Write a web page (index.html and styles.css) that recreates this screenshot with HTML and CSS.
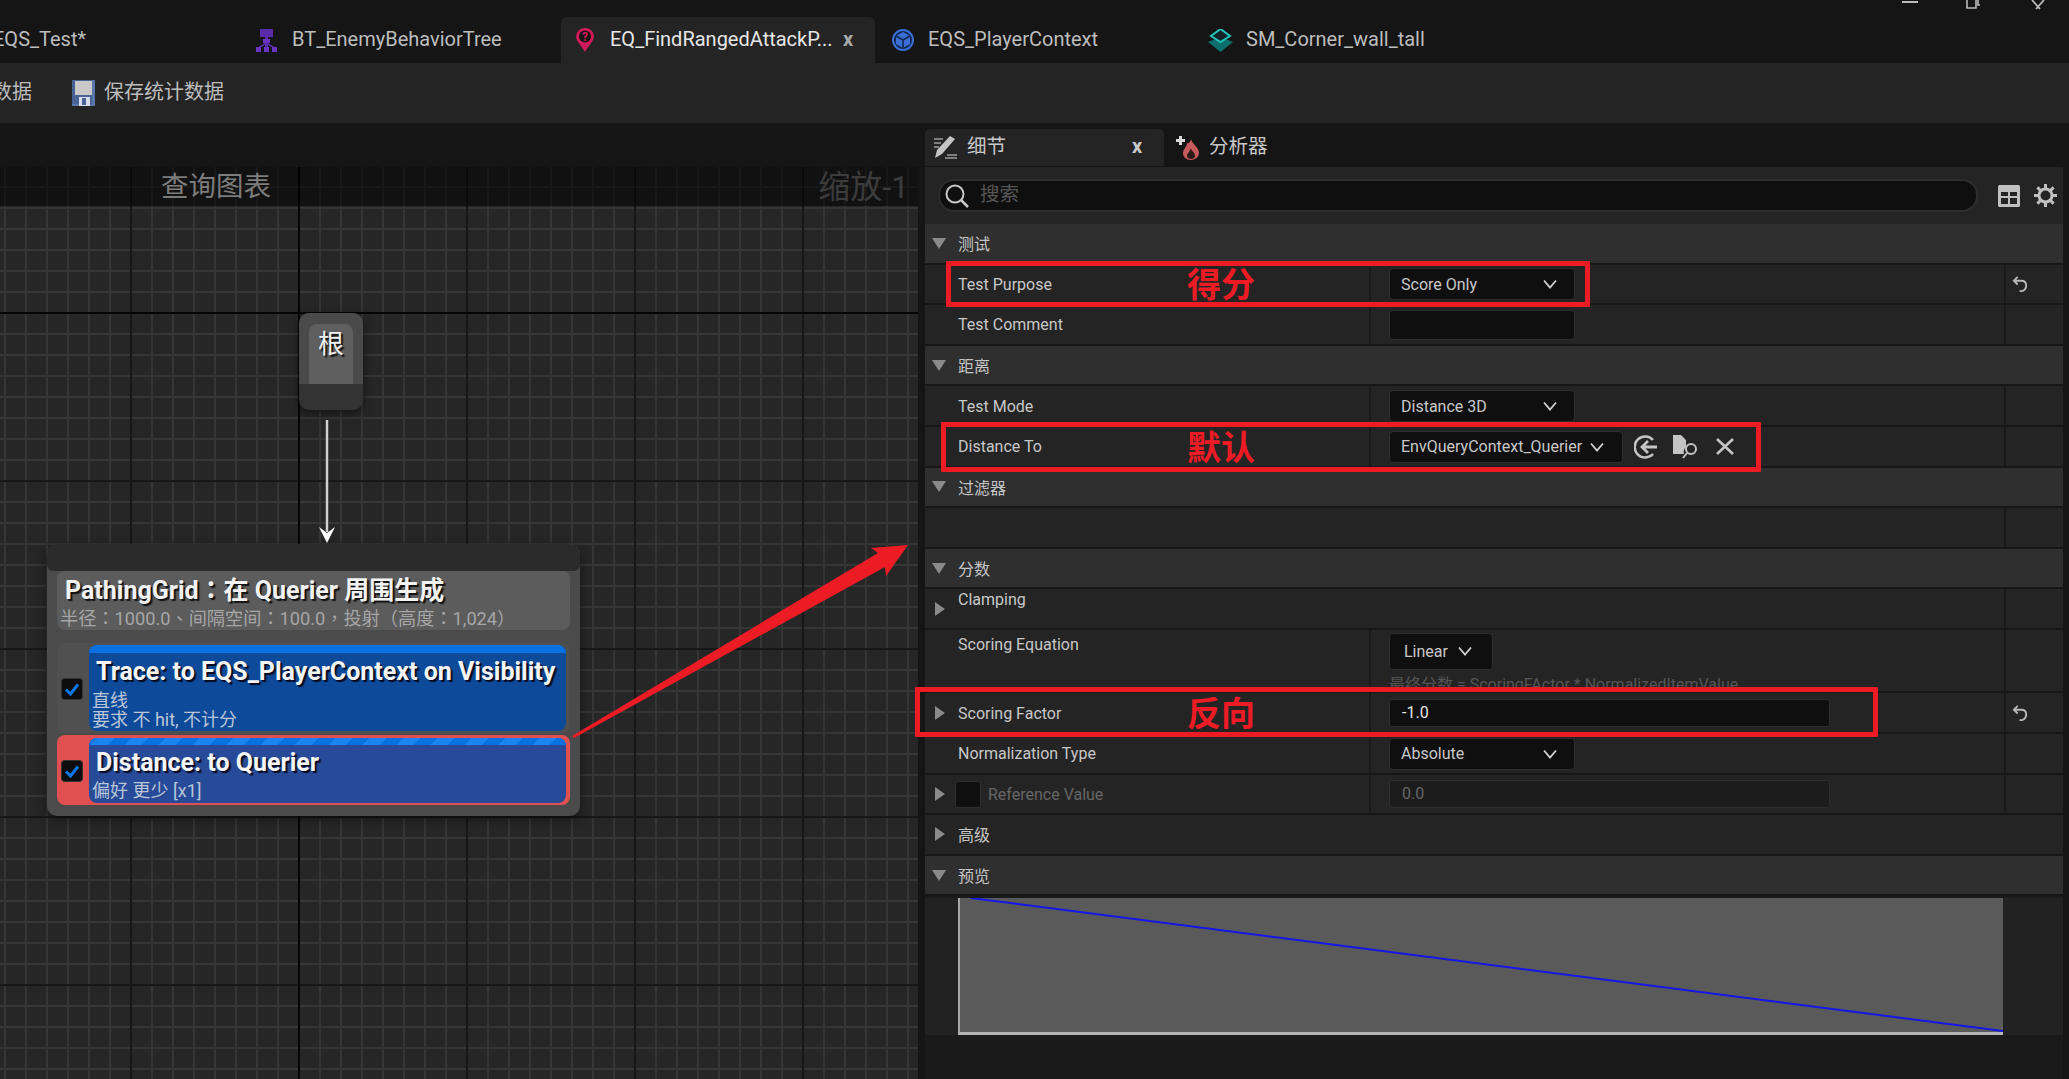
FILE: index.html
```html
<!DOCTYPE html>
<html lang="zh">
<head>
  <meta charset="UTF-8" />
  <title>EQ_FindRangedAttackPosition</title>
  <link rel="stylesheet" href="styles.css">
</head>
<body>
  <svg class="defs" width="0" height="0">
    <symbol id="chev" viewBox="0 0 14 10"><path d="M1 1.5 7 8.5 13 1.5" fill="none" stroke="#d0d0d0" stroke-width="1.8"/></symbol>
    <symbol id="undo" viewBox="0 0 18 18"><path d="M6 1 2 5 6 9M2 5H10C13 5 15 7 15 10S13 16 10 16H8" fill="none" stroke="#b8b8b8" stroke-width="2"/></symbol>
    <symbol id="check" viewBox="0 0 22 22"><rect x="0.5" y="0.5" width="21" height="21" rx="3" fill="#0d0d0d" stroke="#333"/><path d="M5 11.5 9.5 16 17 6.5" fill="none" stroke="#0a78e8" stroke-width="3"/></symbol>
  </svg>

  <div class="tabs">
    <div class="tab tab-first"><span class="tab-clip">EQS_Test*</span></div>
    <div class="tab tab-bt">
      <svg class="tab-icon" width="21" height="23" viewBox="0 0 21 23">
        <rect x="4" y="0" width="13" height="8" fill="#5a2aa8"/>
        <rect x="9" y="8" width="3" height="12" fill="#5a2aa8"/>
        <rect x="7" y="10" width="7" height="4" fill="#6a35c0"/>
        <path d="M10.5 14 2.5 19M10.5 14 18.5 19" stroke="#5a2aa8" stroke-width="1.5"/>
        <rect x="0" y="18" width="5" height="5" fill="#6a35c0"/>
        <rect x="8" y="18" width="5" height="5" fill="#6a35c0"/>
        <rect x="16" y="18" width="5" height="5" fill="#6a35c0"/>
      </svg>
      <span>BT_EnemyBehaviorTree</span>
    </div>
    <div class="tab tab-active">
      <svg class="tab-icon" width="18" height="24" viewBox="0 0 18 24">
        <path d="M9 24C5 17 0 13 0 8.500A9 8.500 0 0 1 18 8.500C18 13 13 17 9 24Z" fill="#d11a5b"/>
        <circle cx="9" cy="8.500" r="6" fill="#151515"/>
        <text x="9" y="13" class="pin-mark">?</text>
      </svg>
      <span class="tab-name">EQ_FindRangedAttackP...</span>
      <span class="tab-x">x</span>
    </div>
    <div class="tab tab-ctx">
      <svg class="tab-icon" width="22" height="24" viewBox="0 0 22 24">
        <circle cx="11" cy="12" r="10" fill="#12264f" stroke="#3a6fd8" stroke-width="2"/>
        <path d="M11 4 18 8 18 16 11 20 4 16 4 8Z" fill="#3a6fd8"/>
        <path d="M4 8 11 12 18 8M11 12V20" fill="none" stroke="#12264f" stroke-width="1.600"/>
      </svg>
      <span>EQS_PlayerContext</span>
    </div>
    <div class="tab tab-sm">
      <svg class="tab-icon" width="25" height="23" viewBox="0 0 25 23">
        <path d="M12.500 8 25 13 12.500 23 0 13Z" fill="#0d6f6b"/>
        <path d="M12.500 0 22 7 12.500 13 3 7Z" fill="#12262a" stroke="#1fc4bd" stroke-width="2"/>
      </svg>
      <span>SM_Corner_wall_tall</span>
    </div>
    <div class="win-btns">
      <svg width="16" height="4" viewBox="0 0 16 4"><path d="M0 2H16" stroke="#bbb" stroke-width="2"/></svg>
      <svg width="15" height="9" viewBox="0 0 15 9"><path d="M1 0V8H10V0M12 0V5H14" fill="none" stroke="#bbb" stroke-width="1.600"/></svg>
      <svg width="18" height="10" viewBox="0 0 18 10"><path d="M3 0 11 9M15 0 7 9" stroke="#bbb" stroke-width="1.800"/></svg>
    </div>
  </div>

  <div class="toolbar">
    <span class="tool-clip">数据</span>
    <svg class="save-icon" width="23" height="26" viewBox="0 0 23 26">
      <rect x="0" y="0" width="23" height="26" fill="#5b76a8"/>
      <rect x="0" y="0" width="20" height="24" fill="#4a6396"/>
      <rect x="3" y="1" width="17" height="14" fill="#c9c9c9"/>
      <rect x="7" y="17" width="11" height="9" fill="#d6dcea"/>
      <rect x="10" y="18" width="4" height="7" fill="#4a6396"/>
    </svg>
    <span>保存统计数据</span>
  </div>

  <div class="workspace">
    <div class="graph-col">
      <div class="graph">
        <div class="graph-title">
          <span>查询图表</span>
          <span class="zoom-label">缩放-1</span>
        </div>

        <div class="root-node">
          <div class="root-top"><div class="root-box">根</div></div>
        </div>
        <svg class="link" width="20" height="125" viewBox="0 0 20 125">
          <path d="M10 0V112" stroke="#cfcfcf" stroke-width="2.500"/>
          <path d="M2 107 10 113 18 107 10 123Z" fill="#fff"/>
        </svg>

        <div class="node">
          <div class="node-top"></div>
          <div class="node-head">
            <div class="node-title" lang="zh-Hant">PathingGrid：在 Querier 周围生成</div>
            <div class="node-sub" lang="zh-Hant">半径：1000.0、间隔空间：100.0，投射（高度：1,024）</div>
          </div>
          <div class="test test-trace">
            <svg class="test-check" width="22" height="22"><use href="#check"/></svg>
            <div class="test-body body-trace">
              <div class="test-stripe"></div>
              <div class="test-title">Trace: to EQS_PlayerContext on Visibility</div>
              <div class="test-sub test-sub-first">直线</div>
              <div class="test-sub test-sub-next">要求 不 hit, 不计分</div>
            </div>
          </div>
          <div class="test test-dist">
            <svg class="test-check" width="22" height="22"><use href="#check"/></svg>
            <div class="test-body body-dist">
              <div class="test-stripe stripe-hatched"></div>
              <div class="test-title title-dist">Distance: to Querier</div>
              <div class="test-sub">偏好 更少 [x1]</div>
            </div>
          </div>
        </div>
      </div>
    </div>

    <div class="panel">
      <div class="panel-tabs">
        <div class="ptab ptab-on">
          <svg width="24" height="23" viewBox="0 0 24 23">
            <path d="M1 3H10M1 7H8M1 11H6M14 19H24M12 22H24" stroke="#9a9a9a" stroke-width="1.500"/>
            <path d="M17 0 22 3 9 18 2 22 4 14Z" fill="#c4c4c4"/>
          </svg>
          <span class="ptab-name">细节</span>
          <span class="ptab-x">x</span>
        </div>
        <div class="ptab ptab-off">
          <svg width="25" height="24" viewBox="0 0 25 24">
            <path d="M4 0H7V3H10V6H7V9H4V6H1V3H4Z" fill="#d8d8d8"/>
            <path d="M16 3C17 8 24 11 24 17C24 21 20 24 16 24C11 24 8 21 8 17C8 13 12 11 12 7C14 8 15 6 16 3Z" fill="#c75a5a"/>
            <path d="M16 12C16 15 20 16 20 20C20 22 18 23 16 23C14 23 12 22 12 20C12 17 15 16 16 12Z" fill="#2a1a1a"/>
          </svg>
          <span class="ptab-label">分析器</span>
        </div>
      </div>

      <div class="search-bar">
        <div class="search-box">
          <svg width="24" height="24" viewBox="0 0 24 24"><circle cx="10" cy="10" r="8.500" fill="none" stroke="#c8c8c8" stroke-width="2"/><path d="M16 16 23 23" stroke="#c8c8c8" stroke-width="2.500"/></svg>
          <span class="search-hint">搜索</span>
        </div>
        <svg class="search-tool" width="22" height="22" viewBox="0 0 22 22"><path d="M0 1.500A1.500 1.500 0 0 1 1.500 0H20.500A1.500 1.500 0 0 1 22 1.500V20.500A1.500 1.500 0 0 1 20.500 22H1.500A1.500 1.500 0 0 1 0 20.500Z" fill="#c0c0c0"/><path d="M3 7H10V11H3ZM12 7H19V11H12ZM3 13H10V19H3ZM12 13H19V19H12Z" fill="#242424"/></svg>
        <svg class="search-gear" width="23" height="23" viewBox="0 0 23 23"><circle cx="11.500" cy="11.500" r="6.500" fill="none" stroke="#c0c0c0" stroke-width="3"/><path d="M11.500 0V5M11.500 18V23M0 11.500H5M18 11.500H23M3.400 3.400 7 7M16 16 19.600 19.600M3.400 19.600 7 16M16 7 19.600 3.400" stroke="#c0c0c0" stroke-width="3"/></svg>
      </div>

      <div class="section"><i class="tri-down"></i>测试</div>
      <div class="row">
        <div class="row-label">Test Purpose</div>
        <div class="row-value"><div class="combo combo-wide">Score Only<svg class="chev"><use href="#chev"/></svg></div></div>
        <div class="row-reset"><svg width="17" height="17"><use href="#undo"/></svg></div>
      </div>
      <div class="row">
        <div class="row-label">Test Comment</div>
        <div class="row-value"><div class="field field-comment"></div></div>
        <div class="row-reset"></div>
      </div>

      <div class="section"><i class="tri-down"></i>距离</div>
      <div class="row">
        <div class="row-label">Test Mode</div>
        <div class="row-value"><div class="combo combo-wide">Distance 3D<svg class="chev"><use href="#chev"/></svg></div></div>
        <div class="row-reset"></div>
      </div>
      <div class="row">
        <div class="row-label">Distance To</div>
        <div class="row-value">
          <div class="combo combo-ctx">EnvQueryContext_Querier<svg class="chev"><use href="#chev"/></svg></div>
          <svg class="ctx-back" width="24" height="24" viewBox="0 0 24 24"><path d="M19 5A10.500 10.500 0 1 0 19 19" fill="none" stroke="#c4c4c4" stroke-width="2.500"/><path d="M23 12H9M14 6 8 12 14 18" fill="none" stroke="#c4c4c4" stroke-width="2.800"/></svg>
          <svg class="ctx-browse" width="25" height="24" viewBox="0 0 25 24"><path d="M0 0H8L13 5V12A7 7 0 0 0 11 19H0Z" fill="#c4c4c4"/><circle cx="18" cy="14" r="5" fill="none" stroke="#c4c4c4" stroke-width="2"/><path d="M14 18 10 23" stroke="#c4c4c4" stroke-width="2"/></svg>
          <svg class="ctx-clear" width="18" height="17" viewBox="0 0 18 17"><path d="M1 1 17 16M17 1 1 16" stroke="#c4c4c4" stroke-width="2.600"/></svg>
        </div>
        <div class="row-reset"></div>
      </div>

      <div class="section"><i class="tri-down"></i>过滤器</div>
      <div class="row row-blank"><div class="row-label"></div><div class="row-value row-value-none"></div><div class="row-reset"></div></div>

      <div class="section"><i class="tri-down"></i>分数</div>
      <div class="row">
        <div class="row-label row-label-split"><i class="tri-right"></i><span class="label-top">Clamping</span></div>
        <div class="row-value row-value-none"></div>
        <div class="row-reset"></div>
      </div>
      <div class="row row-tall">
        <div class="row-label label-eq">Scoring Equation</div>
        <div class="row-value value-eq">
          <div class="combo combo-linear">Linear<svg class="chev"><use href="#chev"/></svg></div>
          <div class="formula">最终分数 = ScoringFActor * NormalizedItemValue</div>
        </div>
        <div class="row-reset"></div>
      </div>
      <div class="row">
        <div class="row-label row-label-split"><i class="tri-right"></i>Scoring Factor</div>
        <div class="row-value"><div class="field field-num">-1.0</div></div>
        <div class="row-reset"><svg width="17" height="17"><use href="#undo"/></svg></div>
      </div>
      <div class="row">
        <div class="row-label">Normalization Type</div>
        <div class="row-value"><div class="combo combo-wide">Absolute<svg class="chev"><use href="#chev"/></svg></div></div>
        <div class="row-reset"></div>
      </div>
      <div class="row">
        <div class="row-label row-label-split row-off"><i class="tri-right"></i><i class="ref-box"></i>Reference Value</div>
        <div class="row-value"><div class="field field-num field-off">0.0</div></div>
        <div class="row-reset"></div>
      </div>

      <div class="section section-plain"><i class="tri-right"></i>高级</div>
      <div class="section"><i class="tri-down"></i>预览</div>
      <div class="chart-row">
        <svg class="chart" width="1045" height="137" viewBox="0 0 1043 134"><path d="M11 0 1043 133" stroke="#1616e6" stroke-width="2" fill="none"/></svg>
      </div>
    </div>
  </div>

  <div class="mark mark-purpose"><span>得分</span></div>
  <div class="mark mark-default"><span>默认</span></div>
  <div class="mark mark-factor"><span>反向</span></div>
  <svg class="big-arrow" width="345" height="200" viewBox="0 0 345 200">
    <path d="M2 196 308 13 301 8 338 5 316 36 315 27 4 198Z" fill="#ed1c24"/>
  </svg>
</body>
</html>
```

FILE: styles.css
```css
* {
  box-sizing: border-box;
}
html, body {
  margin: 0;
  height: 100%;
}
body {
  width: 2069px;
  height: 1079px;
  overflow: hidden;
  position: relative;
  background-color: #151515;
  color: #c8c8c8;
  font-family: Roboto, "Noto Sans CJK SC", sans-serif;
  font-size: 16px;
}
svg {
  display: block;
  flex: none;
}
.defs {
  position: absolute;
}

/* title strip */
.tabs {
  display: flex;
  align-items: flex-end;
  height: 63px;
  font-size: 20px;
  color: #bdbdbd;
}
.tab {
  display: flex;
  align-items: center;
  height: 46px;
  flex: none;
}
.tab span {
  padding-bottom: 2px;
}
.tab-icon {
  margin-right: 15px;
}
.tab-first { width: 241px; }
.tab-clip { margin-left: -7px; }
.tab-bt { width: 320px; padding-left: 15px; }
.tab-active {
  width: 314px;
  padding-left: 15px;
  background-color: #242424;
  border-radius: 6px 6px 0 0;
  color: #e6e6e6;
}
.tab-active .tab-icon { margin-right: 16px; }
.pin-mark {
  font-size: 12px;
  font-weight: 700;
  fill: #d11a5b;
  text-anchor: middle;
}
.tab-name {
  width: 233px;
  white-space: nowrap;
}
.tab-x { color: #a8a8a8; font-size: 20px; font-weight: 700; }
.tab-ctx { width: 318px; padding-left: 17px; }
.tab-ctx .tab-icon { margin-right: 14px; }
.tab-sm { padding-left: 15px; }
.tab-sm .tab-icon { margin-right: 13px; }
.win-btns {
  display: flex;
  align-items: flex-start;
  align-self: flex-start;
  margin-left: auto;
  margin-right: 22px;
  gap: 48px;
}

/* toolbar */
.toolbar {
  display: flex;
  align-items: center;
  height: 60px;
  background-color: #242424;
  font-size: 20px;
  color: #bdbdbd;
}
.toolbar span {
  padding-bottom: 5px;
}
.tool-clip { margin-left: -8px; width: 80px; }
.save-icon { margin-right: 9px; }

.workspace {
  display: flex;
  height: 956px;
}

/* graph */
.graph-col {
  width: 918px;
  padding-top: 44px;
  flex: none;
}
.graph {
  position: relative;
  height: 912px;
  overflow: hidden;
  background-color: #262626;
  background-image:
    linear-gradient(#050505, #050505),
    linear-gradient(#050505, #050505),
    linear-gradient(90deg, #171717 2px, transparent 2px),
    linear-gradient(#171717 2px, transparent 2px),
    linear-gradient(90deg, #353535 2px, transparent 2px),
    linear-gradient(#353535 2px, transparent 2px);
  background-size:
    2px 100%,
    100% 2px,
    168px 168px,
    168px 168px,
    21px 21px,
    21px 21px;
  background-position:
    298px 0,
    0 145px,
    130px 0,
    0 145px,
    4px 0,
    0 19px;
  background-repeat: no-repeat, no-repeat, repeat, repeat, repeat, repeat;
}
.graph-title {
  display: flex;
  justify-content: space-between;
  align-items: center;
  height: 39px;
  padding: 0 9px 5px 161px;
  background-color: rgba(0, 0, 0, 0.55);
  font-size: 27.500px;
  color: #7c7c7c;
}
.zoom-label { color: #3c3c3c; font-size: 32px; }

.root-node {
  position: absolute;
  left: 299px;
  top: 146px;
  width: 64px;
  height: 97px;
  background-color: #333;
  border-radius: 10px;
  box-shadow: 0 3px 10px rgba(0, 0, 0, 0.5);
  overflow: hidden;
}
.root-top {
  height: 71px;
  padding: 11px 10px 0;
  background-color: #4a4a4a;
}
.root-box {
  height: 60px;
  background-color: #5f5f5f;
  border-radius: 8px 8px 0 0;
  text-align: center;
  font-size: 26px;
  line-height: 40px;
  color: #f0f0f0;
  text-shadow: 2px 2px 1px #111;
}
.link {
  position: absolute;
  left: 317px;
  top: 253px;
}

.node {
  position: absolute;
  left: 47px;
  top: 377px;
  width: 533px;
  height: 272px;
  background-color: #4b4b4b;
  border-radius: 10px;
  box-shadow: 0 3px 10px rgba(0, 0, 0, 0.5);
}
.node-top {
  height: 27px;
  background-color: #2b2b2b;
  border-radius: 10px 10px 6px 6px;
}
.node-head {
  height: 59px;
  margin: 0 10px;
  padding-top: 4px;
  background-color: #5c5c5c;
  border-radius: 8px;
}
.node-title {
  padding-left: 8px;
  font-family: Roboto, "Noto Sans CJK TC", sans-serif;
  font-size: 25px;
  font-weight: 700;
  line-height: 32px;
  color: #f2f2f2;
  text-shadow: 2px 2px 1px #111;
  white-space: nowrap;
}
.node-sub {
  padding-left: 3px;
  font-family: Roboto, "Noto Sans CJK TC", sans-serif;
  font-size: 18.200px;
  line-height: 24px;
  color: #a6a6a6;
  white-space: nowrap;
}
.test {
  display: flex;
  align-items: center;
  margin: 0 10px;
  padding-left: 4px;
  border-radius: 8px;
}
.test-trace {
  height: 90px;
  margin-top: 13px;
  background-color: #505050;
}
.test-dist {
  height: 70px;
  margin-top: 2px;
  background-color: #e05050;
}
.test-check {
  margin: 2px 6px 0 0;
}
.test-body {
  width: 477px;
  overflow: hidden;
  border-radius: 8px;
}
.body-trace {
  height: 86px;
  background-color: #0e4a9a;
}
.body-dist {
  height: 65px;
  background-color: #274b98;
}
.test-stripe {
  height: 8px;
  background-color: #0a72e0;
}
.stripe-hatched {
  height: 7px;
  background-image: repeating-linear-gradient(-45deg, #0a72e0 0 12px, #1c84f0 12px 24px);
}
.test-title {
  margin-top: 1px;
  padding-left: 7px;
  font-size: 25px;
  font-weight: 700;
  line-height: 36px;
  color: #f5f5f5;
  text-shadow: 2px 2px 1px #0a0a20;
  white-space: nowrap;
}
.title-dist { line-height: 34px; }
.test-sub {
  padding-left: 3px;
  font-size: 18px;
  line-height: 22px;
  color: #b9c5d8;
  white-space: nowrap;
}
.test-sub-next { margin-top: -3px; }

/* details panel */
.panel {
  width: 1138px;
  margin-left: 7px;
  flex: none;
  background-color: #1a1a1a;
}
.panel-tabs {
  display: flex;
  align-items: flex-end;
  height: 44px;
  background-color: #151515;
  font-size: 19.500px;
}
.ptab {
  display: flex;
  align-items: center;
  height: 37px;
  margin-bottom: 1px;
}
.ptab-on {
  width: 239px;
  padding-left: 8px;
  background-color: #242424;
  border-radius: 5px 5px 0 0;
}
.ptab-name { margin-left: 10px; width: 165px; padding-bottom: 6px; }
.ptab-label { padding-bottom: 6px; }
.ptab-x { font-size: 20px; font-weight: 700; color: #c8c8c8; padding-bottom: 3px; }
.ptab-off { padding-left: 11px; gap: 9px; }

.search-bar {
  display: flex;
  align-items: center;
  height: 57px;
  padding-left: 13px;
  background-color: #242424;
}
.search-box {
  display: flex;
  align-items: center;
  gap: 11px;
  width: 1040px;
  height: 33px;
  padding-left: 5px;
  background-color: #0f0f0f;
  border: 2px solid #2e2e2e;
  border-radius: 16px;
  font-size: 19.500px;
  color: #555;
}
.search-hint { padding-bottom: 6px; }
.search-tool { margin-left: 20px; }
.search-gear { margin-left: 14px; }

.section {
  display: flex;
  align-items: center;
  height: 40.600px;
  padding-left: 7px;
  background-color: #2f2f2f;
  border-bottom: 2px solid #171717;
  font-size: 16px;
  color: #c4c4c4;
}
.section-plain {
  padding-left: 10px;
  background-color: #242424;
}
.tri-down {
  width: 0;
  height: 0;
  margin-right: 12px;
  border-left: 7.500px solid transparent;
  border-right: 7.500px solid transparent;
  border-top: 11px solid #8a8a8a;
}
.tri-right {
  flex: none;
  width: 0;
  height: 0;
  margin-right: 13px;
  border-top: 7.500px solid transparent;
  border-bottom: 7.500px solid transparent;
  border-left: 10px solid #8a8a8a;
}

.row {
  display: grid;
  grid-template-columns: 444px 635px 59px;
  height: 40.600px;
  background-color: #242424;
  border-bottom: 2px solid #171717;
}
.row-tall { height: 63.400px; }
.row-label {
  display: flex;
  align-items: center;
  padding-left: 33px;
  padding-top: 1px;
  white-space: nowrap;
}
.row-label-split { padding-left: 10px; }
.label-top { margin-top: -20px; }
.label-eq { align-items: flex-start; padding-top: 2px; line-height: 26px; }
.row-off { color: #666; }
.ref-box {
  width: 26px;
  height: 27px;
  margin: 0 7px 0 -3px;
  background-color: #0f0f0f;
  border: 1px solid #2e2e2e;
  border-radius: 3px;
}
.row-value {
  display: flex;
  align-items: center;
  padding-left: 18px;
  padding-top: 1px;
  border-left: 2px solid #1a1a1a;
}
.row-value-none { padding: 0; border-left: 0; }
.value-eq {
  flex-direction: column;
  align-items: flex-start;
  overflow: hidden;
  padding-top: 3px;
}
.row-reset {
  display: flex;
  align-items: center;
  padding-left: 6px;
  padding-top: 1px;
  border-left: 2px solid #1a1a1a;
}
.combo {
  display: flex;
  flex: none;
  align-items: center;
  justify-content: space-between;
  height: 32px;
  padding: 0 12px 0 11px;
  background-color: #0f0f0f;
  border: 1px solid #2e2e2e;
  border-radius: 4px;
  color: #c8c8c8;
  white-space: nowrap;
}
.chev {
  width: 14px;
  height: 10px;
}
.combo-wide { width: 186px; padding-right: 17px; }
.combo-ctx { width: 234px; padding-right: 18px; }
.combo-linear {
  width: 104px;
  height: 37px;
  padding: 0 20px 0 14px;
}
.formula {
  margin-top: 1px;
  color: #555;
  white-space: nowrap;
}
.field {
  height: 28px;
  background-color: #0f0f0f;
  border: 1px solid #2e2e2e;
  border-radius: 3px;
}
.field-comment { width: 186px; height: 30px; }
.field-num {
  width: 441px;
  padding-left: 12px;
  line-height: 26px;
  color: #e4e4e4;
}
.field-off {
  background-color: #1c1c1c;
  color: #666;
}
.ctx-back { margin-left: 11px; }
.ctx-browse { margin-left: 15px; }
.ctx-clear { margin-left: 18px; }

.chart-row {
  height: 137px;
  margin-top: 2px;
  padding-left: 33px;
  background-color: #222;
}
.chart {
  background-color: #5a5a5a;
  border-left: 2px solid #a8a8a8;
  border-bottom: 3px solid #b4b4b4;
}

/* red notes drawn on top of the shot */
.mark {
  position: absolute;
  display: flex;
  align-items: center;
  border: 5px solid #ed1c24;
  border-radius: 1px;
  font-family: "Noto Sans CJK SC", sans-serif;
  font-size: 34px;
  font-weight: 700;
  color: #ed1c24;
}
.mark-purpose { left: 946px; top: 261px; width: 644px; height: 46px; padding: 0 0 3px 236px; }
.mark-default { left: 941px; top: 422px; width: 820px; height: 50px; padding: 0 0 3px 241px; }
.mark-factor { left: 915px; top: 687px; width: 963px; height: 50px; padding: 0 0 2px 267px; }
.big-arrow {
  position: absolute;
  left: 570px;
  top: 540px;
}
```
